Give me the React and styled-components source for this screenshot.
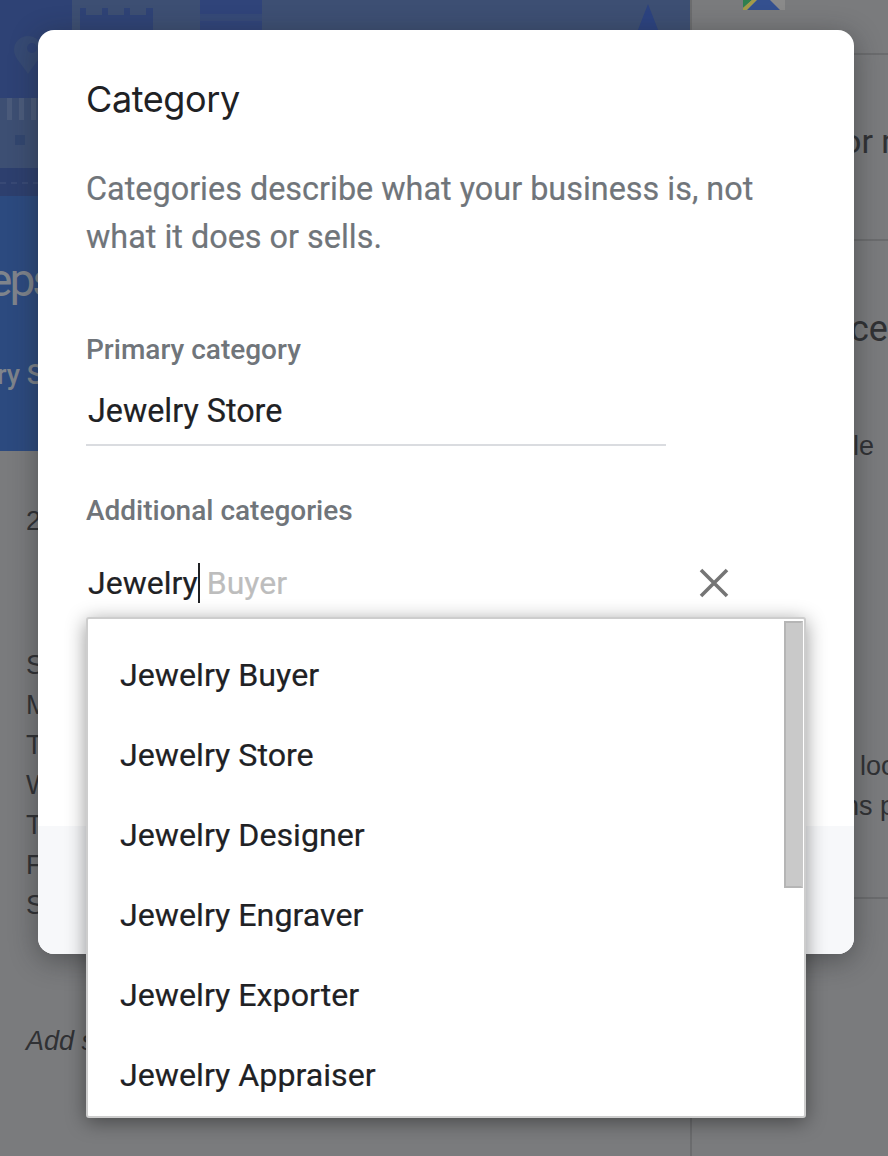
import React from "react";
import styled, { createGlobalStyle } from "styled-components";

const Global = createGlobalStyle`
  html, body { margin: 0; padding: 0; background: #7a7b7d; }
  * { box-sizing: border-box; }
  #root { width: 888px; height: 1156px; overflow: hidden; }
`;

const Page = styled.div`
  position: relative;
  width: 888px;
  height: 1156px;
  overflow: hidden;
  display: grid;
  grid-template-columns: 692px 1fr;
  background: #7a7b7d;
  font-family: "Liberation Sans", Arial, sans-serif;
  color: #303134;
`;

const LeftColumn = styled.div`
  border-right: 2px solid #6b6c6e;
  display: flex;
  flex-direction: column;
`;

const Hero = styled.div`
  height: 451px;
  flex: none;
  background: #2c4a7f;
  color: #7f848c;
  overflow: hidden;
  display: flex;
  flex-direction: column;
`;

const HeroArt = styled.svg`
  display: block;
  width: 690px;
  height: 196px;
  flex: none;
`;

const HeroTitle = styled.div`
  margin: 58px 0 0 -12px;
  font: 400 46px/52px Roboto, sans-serif;
  letter-spacing: -3px;
`;

const HeroSub = styled.div`
  margin: 52px 0 0 -3px;
  font: 500 27px/34px Roboto, sans-serif;
`;

const Details = styled.div`
  padding: 50px 0 0 26px;
  font-size: 27px;
  line-height: 40px;
`;

const HoursList = styled.div`
  margin-top: 104px;
`;

const AddNote = styled.div`
  margin-top: 96px;
  font-style: italic;
`;

const RightColumn = styled.div`
  display: flex;
  flex-direction: column;
`;

const SideSection = styled.div`
  height: ${(p) => p.$h}px;
  flex: none;
  padding-top: ${(p) => p.$top || 0}px;
  border-bottom: 2px solid #6b6c6e;
`;

const MapsLogo = styled.svg`
  display: block;
  margin-left: 51px;
  width: 42px;
  height: 10px;
`;

const SideHeading = styled.div`
  margin-left: ${(p) => p.$x}px;
  font: 400 ${(p) => p.$size}px/40px Roboto, sans-serif;
  white-space: nowrap;
`;

const SideText = styled.div`
  margin: ${(p) => p.$gap || 0}px 0 0 ${(p) => p.$x}px;
  font: 400 27px/40px "Liberation Sans", sans-serif;
  white-space: nowrap;
`;

const Modal = styled.div`
  position: absolute;
  left: 38px;
  top: 30px;
  width: 816px;
  height: 924px;
  background: #fff;
  border-radius: 16px;
  box-shadow: 0 6px 28px rgba(32, 33, 36, 0.45);
  display: flex;
  flex-direction: column;
  font-family: Roboto, sans-serif;
`;

const ModalBody = styled.div`
  flex: 1;
  padding: 46px 48px 0;
`;

const Footer = styled.div`
  height: 128px;
  flex: none;
  background: #f7f8fa;
  border-radius: 0 0 16px 16px;
`;

const Title = styled.h2`
  margin: 0;
  font: 400 36px/46px Inter, sans-serif;
  color: #202124;
  letter-spacing: -0.4px;
`;

const Description = styled.p`
  margin: 43px 0 0;
  width: 690px;
  font: 400 32.4px/48px Roboto, sans-serif;
  color: #70757a;
  -webkit-text-stroke: 0.2px #70757a;
`;

const FieldLabel = styled.div`
  font: 500 28px/36px Roboto, sans-serif;
  color: #70757a;
`;

const PrimaryField = styled.div`
  margin-top: 71px;
`;

const PrimaryValue = styled.div`
  width: 580px;
  height: 59px;
  margin-top: 19px;
  padding: 3px 0 0 2px;
  border-bottom: 2px solid #dadce0;
  font: 400 32.3px/42px Roboto, sans-serif;
  color: #202124;
  -webkit-text-stroke: 0.2px #202124;
`;

const AdditionalField = styled.div`
  position: relative;
  margin-top: 47px;
`;

const InputRow = styled.div`
  display: flex;
  align-items: center;
  width: 644px;
  height: 54px;
  margin-top: 27px;
  padding-left: 2px;
  font: 400 32px/42px Roboto, sans-serif;
  -webkit-text-stroke: 0.2px currentColor;
`;

const Typed = styled.span`
  color: #202124;
  border-right: 2px solid #202124;
  height: 40px;
  line-height: 40px;
`;

const Hint = styled.span`
  margin-left: 7px;
  color: #bdbdbd;
`;

const ClearIcon = styled.svg`
  margin-left: auto;
  width: 32px;
  height: 32px;
  flex: none;
  stroke: #757575;
  stroke-width: 3.6;
  fill: none;
`;

const Dropdown = styled.div`
  position: absolute;
  left: 0;
  top: 124px;
  width: 720px;
  height: 501px;
  background: #fff;
  border: 2px solid #cdcdcd;
  border-radius: 3px;
  box-shadow: 0 4px 20px rgba(0, 0, 0, 0.42);
  overflow: hidden;
`;

const OptionList = styled.div`
  padding-top: 16px;
`;

const Option = styled.div`
  height: 80px;
  padding-left: 32px;
  display: flex;
  align-items: center;
  font: 400 32.2px/40px Roboto, sans-serif;
  color: #202124;
  -webkit-text-stroke: 0.2px #202124;
`;

const ScrollThumb = styled.div`
  position: absolute;
  right: 1px;
  top: 2px;
  width: 19px;
  height: 267px;
  background: #c9c9c9;
  border: 2px solid #b5b5b5;
  border-right-color: #c9c9c9;
`;

const options = [
  "Jewelry Buyer",
  "Jewelry Store",
  "Jewelry Designer",
  "Jewelry Engraver",
  "Jewelry Exporter",
  "Jewelry Appraiser",
];

const hours = ["Sunday", "Monday", "Tuesday", "Wednesday", "Thursday", "Friday", "Saturday"];

export default function App() {
  return (
    <>
      <Global />
      <Page>
        <LeftColumn>
          <Hero>
            <HeroArt viewBox="0 0 690 196">
              <rect width="690" height="196" fill="#3d4f73" />
              <rect width="72" height="98" fill="#2e4275" />
              <path d="M28 36 a14 14 0 0 1 14 14 c0 8 -8 14 -14 24 c-6 -10 -14 -16 -14 -24 a14 14 0 0 1 14 -14 Z" fill="#364a74" />
              <circle cx="32" cy="48" r="5" fill="#2e4275" />
              <rect x="200" width="62" height="40" fill="#30447a" />
              <rect x="200" y="14" width="62" height="7" fill="#364a78" />
              <path d="M80 8 H86 V15 H102 V8 H108 V15 H124 V8 H130 V15 H146 V8 H153 V40 H80 Z" fill="#2f4376" />
              <path d="M634 40 L648 4 L662 40 Z" fill="#2c4380" />
              <rect x="7" y="98" width="5" height="22" fill="#4b5b7b" />
              <rect x="19" y="98" width="5" height="22" fill="#4b5b7b" />
              <rect x="31" y="98" width="5" height="22" fill="#4b5b7b" />
              <rect x="15" y="135" width="10" height="10" fill="#32466f" />
              <rect y="168" width="690" height="28" fill="#2d3f6e" />
              <path d="M0 183 H38" stroke="#44557c" strokeDasharray="6 5" strokeWidth="1" />
            </HeroArt>
            <HeroTitle>eps</HeroTitle>
            <HeroSub>ry S</HeroSub>
          </Hero>
          <Details>
            <div>2</div>
            <HoursList>
              {hours.map((d) => (
                <div key={d}>{d}</div>
              ))}
            </HoursList>
            <AddNote>Add special hours</AddNote>
          </Details>
        </LeftColumn>
        <RightColumn>
          <SideSection $h={55}>
            <MapsLogo viewBox="0 0 42 10">
              <rect width="42" height="10" fill="#8a8a8a" />
              <path d="M0 8 L9 0 H0 Z" fill="#2f7f4f" />
              <path d="M0 10 V8 L9 0 H14 L4 10 Z" fill="#a39a4a" />
              <path d="M4 10 L14 0 H27 L37 10 Z" fill="#34508f" />
            </MapsLogo>
          </SideSection>
          <SideSection $h={186} $top={66}>
            <SideHeading $x={150} $size={34}>or more</SideHeading>
          </SideSection>
          <SideSection $h={658} $top={68}>
            <SideHeading $x={158} $size={36}>ced</SideHeading>
            <SideText $x={161} $gap={77}>le</SideText>
            <SideText $x={168} $gap={280}>local</SideText>
            <SideText $x={152}>ns page</SideText>
          </SideSection>
        </RightColumn>
        <Modal>
          <ModalBody>
            <Title>Category</Title>
            <Description>Categories describe what your business is, not what it does or sells.</Description>
            <PrimaryField>
              <FieldLabel>Primary category</FieldLabel>
              <PrimaryValue>Jewelry Store</PrimaryValue>
            </PrimaryField>
            <AdditionalField>
              <FieldLabel>Additional categories</FieldLabel>
              <InputRow>
                <Typed>Jewelry</Typed>
                <Hint>Buyer</Hint>
                <ClearIcon viewBox="0 0 32 32">
                  <path d="M3 3 L29 29 M29 3 L3 29" />
                </ClearIcon>
              </InputRow>
              <Dropdown>
                <OptionList>
                  {options.map((o) => (
                    <Option key={o}>{o}</Option>
                  ))}
                </OptionList>
                <ScrollThumb />
              </Dropdown>
            </AdditionalField>
          </ModalBody>
          <Footer />
        </Modal>
      </Page>
    </>
  );
}
